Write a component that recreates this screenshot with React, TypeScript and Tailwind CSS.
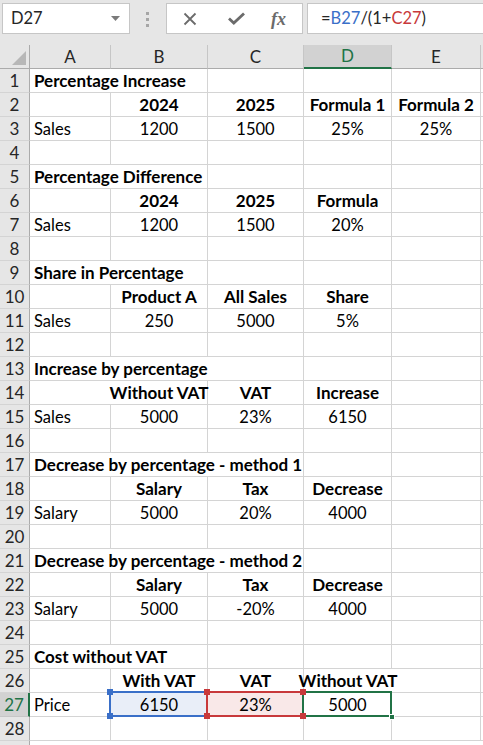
import React from 'react'

type Kind = 'title' | 'head' | 'data' | 'empty'
type Row = { kind: Kind; cells: string[]; hide?: number[] }

const rows: Row[] = [
  { kind: 'title', cells: ['Percentage Increase'], hide: [0] },
  { kind: 'head', cells: ['', '2024', '2025', 'Formula 1', 'Formula 2'] },
  { kind: 'data', cells: ['Sales', '1200', '1500', '25%', '25%'] },
  { kind: 'empty', cells: [] },
  { kind: 'title', cells: ['Percentage Difference'], hide: [0] },
  { kind: 'head', cells: ['', '2024', '2025', 'Formula', ''] },
  { kind: 'data', cells: ['Sales', '1200', '1500', '20%', ''] },
  { kind: 'empty', cells: [] },
  { kind: 'title', cells: ['Share in Percentage'], hide: [0] },
  { kind: 'head', cells: ['', 'Product A', 'All Sales', 'Share', ''] },
  { kind: 'data', cells: ['Sales', '250', '5000', '5%', ''] },
  { kind: 'empty', cells: [] },
  { kind: 'title', cells: ['Increase by percentage'], hide: [0, 1] },
  { kind: 'head', cells: ['', 'Without VAT', 'VAT', 'Increase', ''], hide: [0] },
  { kind: 'data', cells: ['Sales', '5000', '23%', '6150', ''] },
  { kind: 'empty', cells: [] },
  { kind: 'title', cells: ['Decrease by percentage - method 1'], hide: [0, 1] },
  { kind: 'head', cells: ['', 'Salary', 'Tax', 'Decrease', ''] },
  { kind: 'data', cells: ['Salary', '5000', '20%', '4000', ''] },
  { kind: 'empty', cells: [] },
  { kind: 'title', cells: ['Decrease by percentage - method 2'], hide: [0, 1] },
  { kind: 'head', cells: ['', 'Salary', 'Tax', 'Decrease', ''] },
  { kind: 'data', cells: ['Salary', '5000', '-20%', '4000', ''] },
  { kind: 'empty', cells: [] },
  { kind: 'title', cells: ['Cost without VAT'], hide: [0] },
  { kind: 'head', cells: ['', 'With VAT', 'VAT', 'Without VAT', ''], hide: [3] },
  { kind: 'data', cells: ['Price', '6150', '23%', '5000', ''] },
  { kind: 'empty', cells: [] },
]

const letters = ['A', 'B', 'C', 'D', 'E']

function Handle({ className }: { className: string }) {
  return <div className={`absolute w-[6px] h-[6px] z-20 ${className}`} />
}

function FormulaBar() {
  return (
    <div className="h-[45px] bg-[#e6e6e6] relative flex items-start pt-[3px]">
      <div className="ml-[2px] w-[128px] h-[31px] bg-white border border-[#c6c6c6] flex items-center pl-[8px] pr-[9px] justify-between">
        <span className="text-[16.5px] text-[#262626]">D27</span>
        <svg width="9" height="5" viewBox="0 0 9 5"><path d="M0 0h9L4.5 5z" fill="#7b7b7b" /></svg>
      </div>
      <div className="ml-[16px] mt-[9px] flex flex-col gap-[3px]">
        <div className="w-[3px] h-[3px] bg-[#a6a6a6]" />
        <div className="w-[3px] h-[3px] bg-[#a6a6a6]" />
        <div className="w-[3px] h-[3px] bg-[#a6a6a6]" />
      </div>
      <div className="ml-[17px] w-[137px] h-[31px] bg-white border border-[#c6c6c6] flex items-center">
        <svg className="ml-[16px]" width="14" height="14" viewBox="0 0 14 14">
          <path d="M1.5 1.5l11 11M12.5 1.5l-11 11" stroke="#6b6b6b" strokeWidth="1.8" />
        </svg>
        <svg className="ml-[31px]" width="17" height="13" viewBox="0 0 17 13">
          <path d="M1 6.5l4.8 4.5L16 1.5" stroke="#6b6b6b" strokeWidth="2.8" fill="none" />
        </svg>
        <span className="ml-[26px] text-[18px] italic font-bold text-[#6b6b6b] leading-none" style={{ fontFamily: '"Liberation Serif", serif' }}>
          fx
        </span>
      </div>
      <div className="ml-[4px] flex-1 h-[31px] bg-white border border-[#c6c6c6] border-r-0 flex items-center pl-[13px] text-[16.5px] text-[#262626]">
        =<span className="text-[#3a6fc8]">B27</span>/(1+<span className="text-[#c8393b]">C27</span>)
      </div>
    </div>
  )
}

function HeaderRow() {
  return (
    <>
      <div className="h-[24px] bg-[#e6e6e6] border-r border-b border-[#ababab] relative">
        <svg className="absolute right-[3px] bottom-[3px]" width="14" height="14" viewBox="0 0 14 14">
          <path d="M14 0V14H0z" fill="#b7b7b7" />
        </svg>
      </div>
      {letters.map(l => (
        <div
          key={l}
          className={
            l === 'D'
              ? 'h-[24px] bg-[#d2d2d2] border-r border-[#c6c6c6] border-b-2 border-b-[#217346] flex items-center justify-center text-[17px] text-[#217346]'
              : 'h-[24px] bg-[#e6e6e6] border-r border-[#c6c6c6] border-b border-b-[#ababab] flex items-center justify-center text-[17px] text-[#262626]'
          }
        >
          {l}
        </div>
      ))}
      <div className="h-[24px] bg-[#e6e6e6] border-b border-[#ababab]" />
    </>
  )
}

export default function App() {
  return (
    <div className="h-[745px] w-[483px] overflow-hidden bg-white" style={{ fontFamily: 'Lato, "Liberation Sans", sans-serif' }}>
      <FormulaBar />
      <div className="grid grid-cols-[30px_81px_97px_96px_88px_89px_1fr]">
        <HeaderRow />
        {rows.map((r, i) => {
          const n = i + 1
          const sel = n === 27
          return (
            <React.Fragment key={n}>
              <div
                className={
                  sel
                    ? 'h-[24px] bg-[#d2d2d2] border-r-2 border-r-[#217346] border-b border-b-[#c6c6c6] flex items-center justify-center text-[17px] text-[#217346]'
                    : 'h-[24px] bg-[#e6e6e6] border-r border-r-[#ababab] border-b border-b-[#d4d4d4] flex items-center justify-center text-[17px] text-[#262626]'
                }
              >
                {n}
              </div>
              {[0, 1, 2, 3, 4].map(c => {
                const txt = r.cells[c] || ''
                const hidden = r.hide?.includes(c)
                const bold = r.kind === 'title' || r.kind === 'head'
                const left = c === 0
                return (
                  <div
                    key={c}
                    className={`h-[24px] border-b border-[#d4d4d4] relative flex items-end pb-[1px] whitespace-nowrap leading-[20px] text-black ${
                      hidden ? 'border-r-0' : 'border-r'
                    } ${left ? 'justify-start pl-[4px]' : 'justify-center'} ${bold ? 'font-bold text-[17px]' : 'text-[16.5px]'} ${
                      sel && c === 1 ? 'bg-[#e9eef8]' : sel && c === 2 ? 'bg-[#f9e8e8]' : ''
                    }`}
                  >
                    <span className="relative z-10">{txt}</span>
                    {sel && c === 1 && (
                      <>
                        <div className="absolute -left-[2px] -top-[2px] -right-[1px] -bottom-[1px] border-2 border-[#3a6fc8] z-10" />
                        <Handle className="bg-[#3a6fc8] -left-[4px] -top-[4px]" />
                        <Handle className="bg-[#3a6fc8] -left-[4px] -bottom-[3px]" />
                      </>
                    )}
                    {sel && c === 2 && (
                      <>
                        <div className="absolute -left-[2px] -top-[2px] -right-[1px] -bottom-[1px] border-2 border-[#c8393b] z-10" />
                        <Handle className="bg-[#c8393b] -left-[4px] -top-[4px]" />
                        <Handle className="bg-[#c8393b] -left-[4px] -bottom-[3px]" />
                        <Handle className="bg-[#c8393b] -right-[3px] -top-[4px]" />
                        <Handle className="bg-[#c8393b] -right-[3px] -bottom-[3px]" />
                      </>
                    )}
                    {sel && c === 3 && (
                      <>
                        <div className="absolute -left-[2px] -top-[2px] -right-[1px] -bottom-[1px] border-2 border-[#217346] z-10" />
                        <Handle className="bg-[#217346] -right-[4px] -bottom-[4px] border border-white" />
                      </>
                    )}
                  </div>
                )
              })}
              <div className="h-[24px] border-b border-[#d4d4d4]" />
            </React.Fragment>
          )
        })}
        <div className="h-[24px] bg-[#e6e6e6] border-r border-r-[#ababab]" />
      </div>
    </div>
  )
}
